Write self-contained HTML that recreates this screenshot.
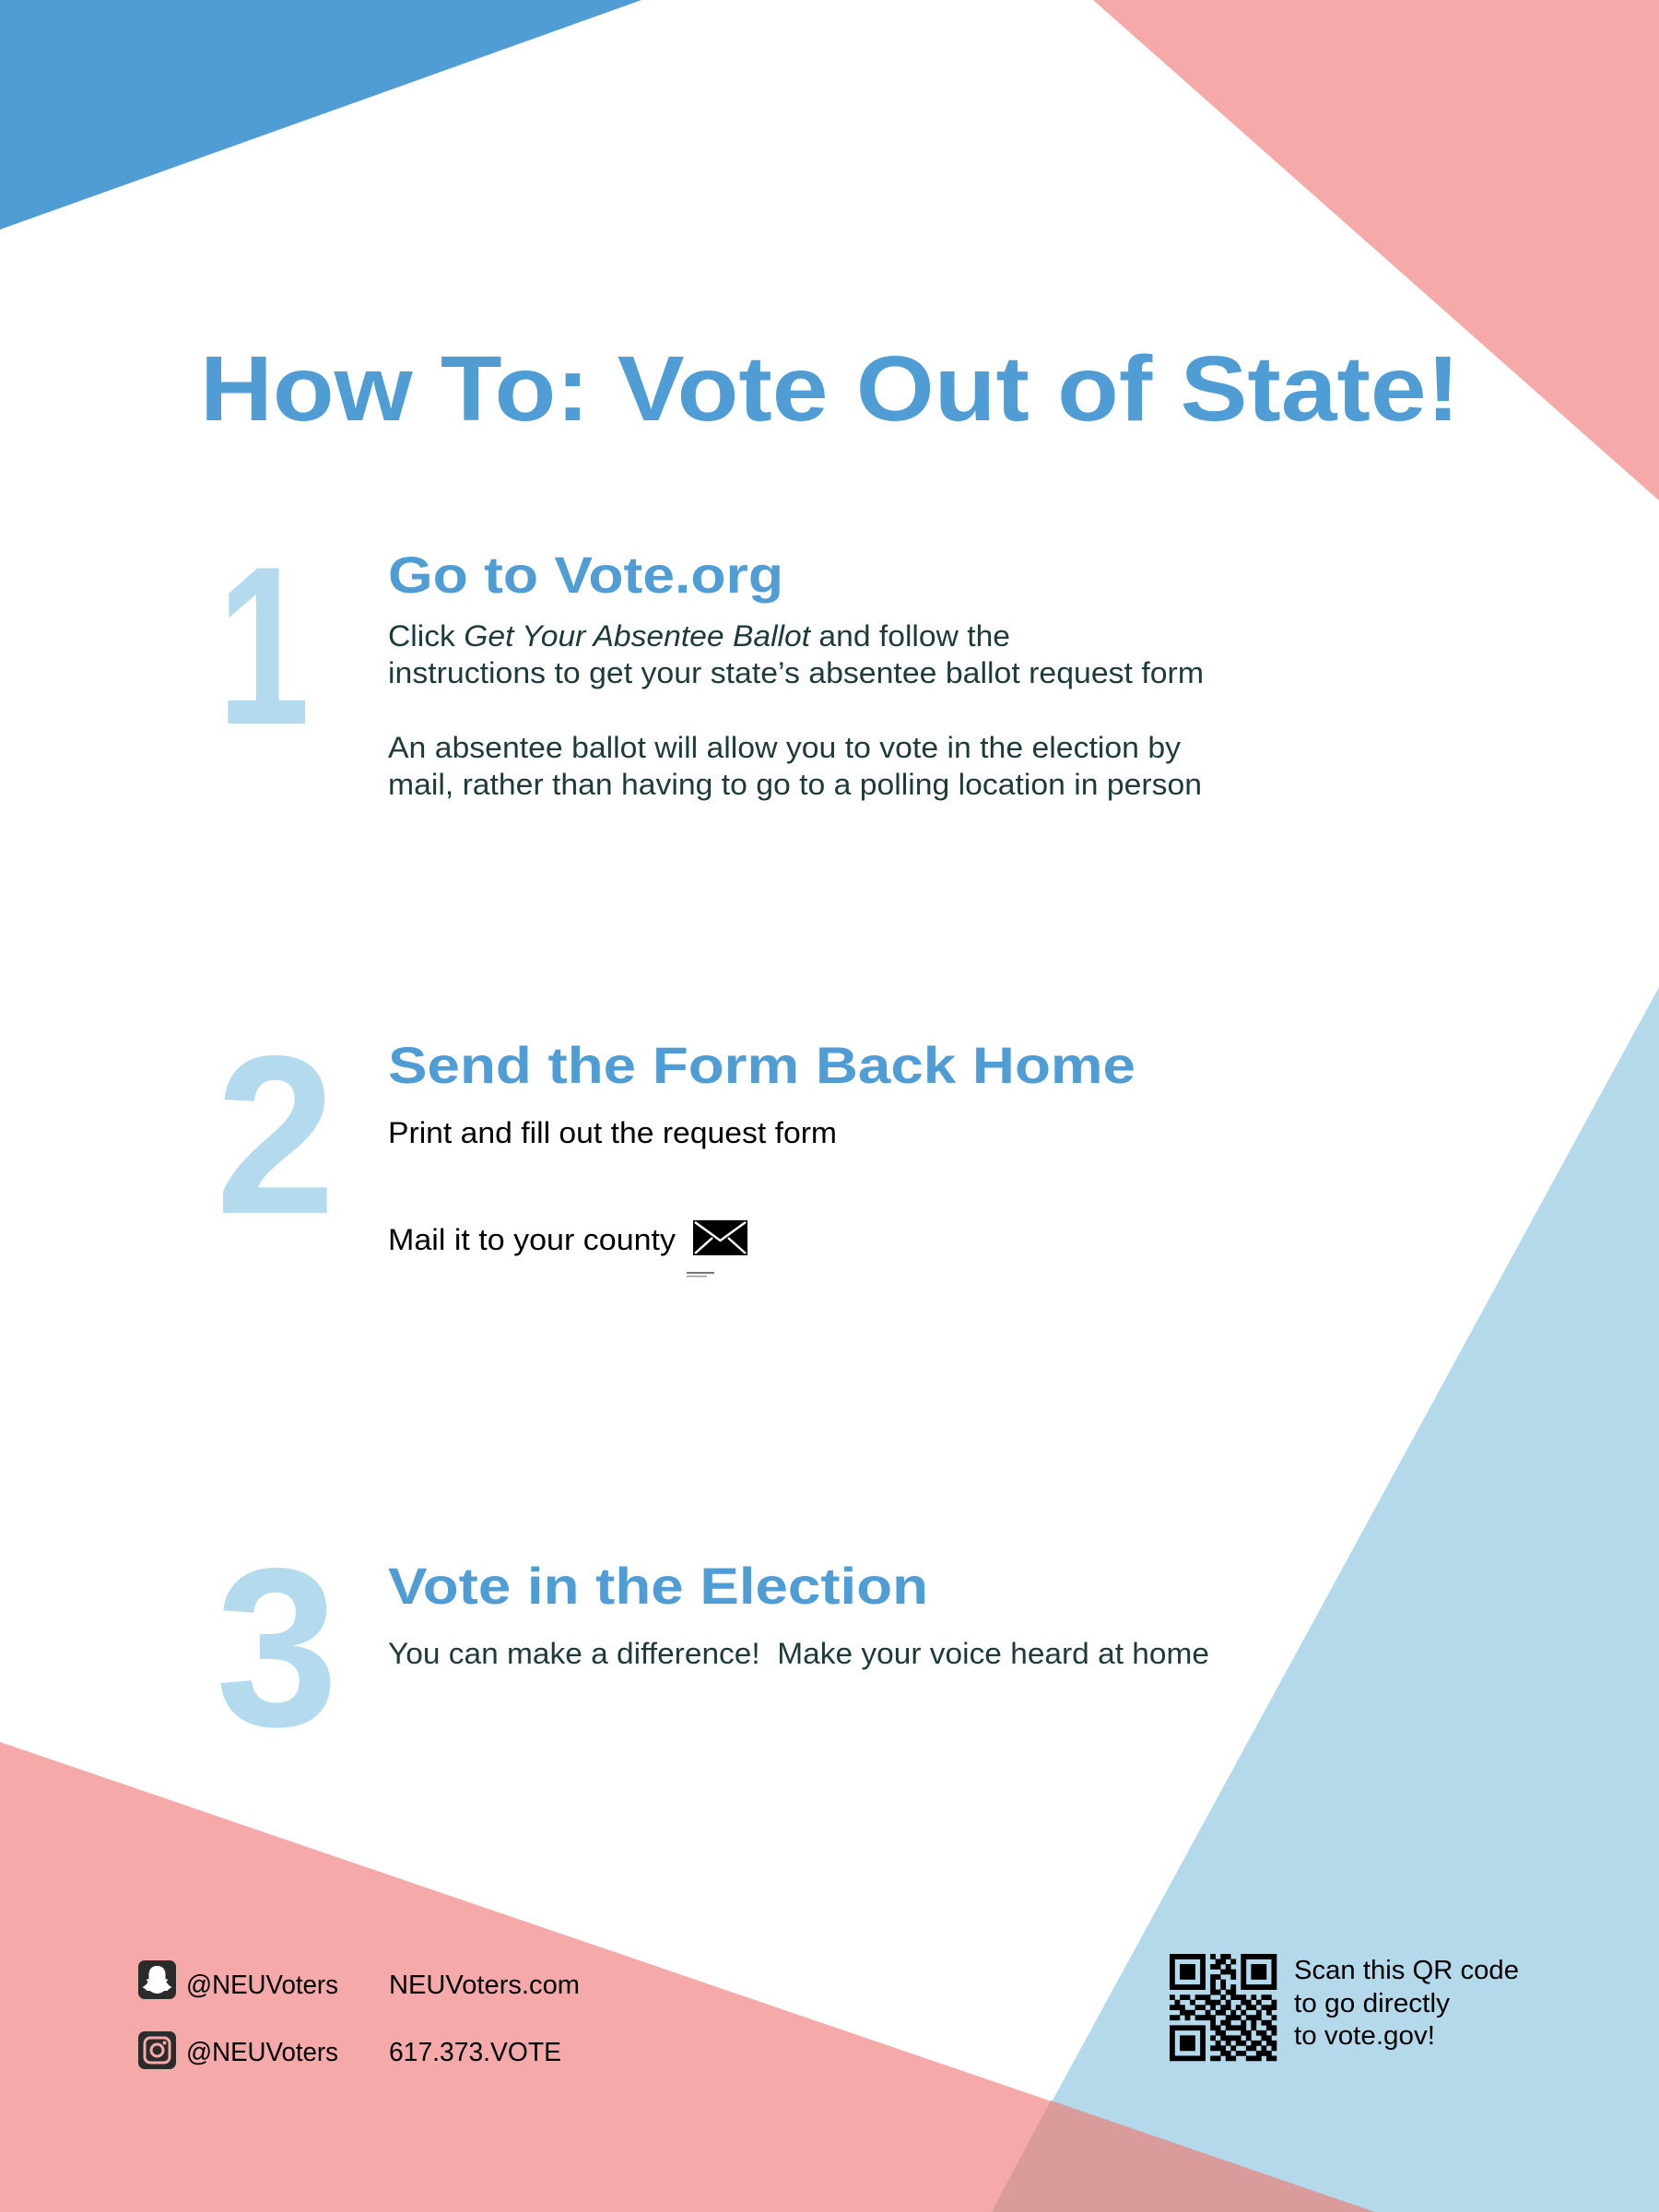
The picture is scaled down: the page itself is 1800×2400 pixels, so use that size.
<!DOCTYPE html>
<html><head><meta charset="utf-8"><style>
html,body{margin:0;padding:0;background:#fff;}
svg{display:block;}
text{font-family:"Liberation Sans",sans-serif;}
</style></head><body>
<svg id="s" xmlns="http://www.w3.org/2000/svg" width="1800" height="2400" viewBox="0 0 1800 2400">
<rect width="1800" height="2400" fill="#fff"/>
<polygon points="0,0 696,0 0,249" fill="#4f9dd4"/>
<polygon points="1186,0 1800,0 1800,543" fill="#f6a9a9"/>
<polygon points="1800,1071 1800,2400 1076,2400" fill="#b3d9eb"/>
<polygon points="0,1890 1492,2400 0,2400" fill="#f6a9a9"/>
<polygon points="1140,2279 1492,2400 1076,2400" fill="#d99c9a"/>

<text x="217" y="456" font-size="100" font-weight="bold" fill="#4f9dd4" textLength="1367" lengthAdjust="spacingAndGlyphs">How To: Vote Out of State!</text>

<g fill="#b3dbed" font-weight="bold">
<text x="236" y="785" font-size="245" textLength="100" lengthAdjust="spacingAndGlyphs">1</text>
<text x="234" y="1316" font-size="245" textLength="130" lengthAdjust="spacingAndGlyphs">2</text>
<text x="234" y="1872" font-size="245" textLength="133" lengthAdjust="spacingAndGlyphs">3</text>
</g>

<g fill="#4f9dd4" font-size="56" font-weight="bold">
<text x="421" y="643" textLength="429" lengthAdjust="spacingAndGlyphs">Go to Vote.org</text>
<text x="421" y="1175" textLength="811" lengthAdjust="spacingAndGlyphs">Send the Form Back Home</text>
<text x="421" y="1740" textLength="586" lengthAdjust="spacingAndGlyphs">Vote in the Election</text>
</g>

<g font-size="32" fill="#1e3a3a">
<text x="421" y="701" textLength="675" lengthAdjust="spacingAndGlyphs">Click <tspan font-style="italic">Get Your Absentee Ballot</tspan> and follow the</text>
<text x="421" y="741" textLength="885" lengthAdjust="spacingAndGlyphs">instructions to get your state’s absentee ballot request form</text>
<text x="421" y="822" textLength="860" lengthAdjust="spacingAndGlyphs">An absentee ballot will allow you to vote in the election by</text>
<text x="421" y="862" textLength="883" lengthAdjust="spacingAndGlyphs">mail, rather than having to go to a polling location in person</text>
<text x="421" y="1805" textLength="891" lengthAdjust="spacingAndGlyphs" xml:space="preserve">You can make a difference!  Make your voice heard at home</text>
</g>
<g font-size="32" fill="#000">
<text x="421" y="1240" textLength="487" lengthAdjust="spacingAndGlyphs">Print and fill out the request form</text>
<text x="421" y="1356" textLength="312" lengthAdjust="spacingAndGlyphs">Mail it to your county</text>
</g>
<rect x="752" y="1324" width="59" height="38" fill="#000"/>
<polyline points="754,1326 781.5,1346 809,1326" fill="none" stroke="#fff" stroke-width="2.5"/>
<polyline points="754,1360 773,1343" fill="none" stroke="#fff" stroke-width="2.5"/>
<polyline points="809,1360 790,1343" fill="none" stroke="#fff" stroke-width="2.5"/>
<rect x="745" y="1380" width="30" height="2" fill="#777"/>
<rect x="745" y="1384" width="22" height="1.5" fill="#999"/>

<rect x="150" y="2127" width="41" height="42" rx="7" fill="#2b2b2b"/>
<path d="M170.5,2133 c-6,0 -9,4 -9,9 v5 l-3,1 2,2 c-1,3 -4,5 -6,6 l3,2 2,2 3,0 c2,1 4,3 8,3 s6,-2 8,-3 l3,0 2,-2 3,-2 c-2,-1 -5,-3 -6,-6 l2,-2 -3,-1 v-5 c0,-5 -3,-9 -9,-9z" fill="#fff"/>
<rect x="150" y="2204" width="41" height="41" rx="7" fill="#2b2b2b"/>
<rect x="157" y="2211" width="27" height="27" rx="6" fill="none" stroke="#f6a9a9" stroke-width="3"/>
<circle cx="170.5" cy="2224.5" r="6.5" fill="none" stroke="#f6a9a9" stroke-width="3"/>
<circle cx="178.5" cy="2216.5" r="2" fill="#f6a9a9"/>
<g font-size="29" fill="#000">
<text x="202" y="2163" textLength="165" lengthAdjust="spacingAndGlyphs">@NEUVoters</text>
<text x="202" y="2236" textLength="165" lengthAdjust="spacingAndGlyphs">@NEUVoters</text>
<text x="422" y="2163" textLength="207" lengthAdjust="spacingAndGlyphs">NEUVoters.com</text>
<text x="422" y="2236" textLength="187" lengthAdjust="spacingAndGlyphs">617.373.VOTE</text>
<text x="1404" y="2147" textLength="244" lengthAdjust="spacingAndGlyphs">Scan this QR code</text>
<text x="1404" y="2183" textLength="169" lengthAdjust="spacingAndGlyphs">to go directly</text>
<text x="1404" y="2218" textLength="153" lengthAdjust="spacingAndGlyphs">to vote.gov!</text>
</g>
<g id="qr" fill="#000"></g>
</svg>
<script>
var rows=["111111101011001111111","100000100110101000001","101110101101001011101","101110100011101011101","101110101100101011101","100000101010001000001","111111101010101111111","000000001101100000000","101101110010111010110","010010011101001101001","111001101011010110111","001110010110101001010","110101111001110111001","000000001011001010110","111111101101111010011","100000100110001101101","101110101011110100110","101110100101011011011","101110101110100110101","100000100011011001110","111111101101100111011"];
var g=document.getElementById('qr'),m=116/21,d="";
for(var r=0;r<21;r++)for(var c=0;c<21;c++)if(rows[r][c]=="1"){var x=1269+c*m,y=2120+r*m;d+="M"+x.toFixed(2)+" "+y.toFixed(2)+"h"+(m+0.3).toFixed(2)+"v"+(m+0.3).toFixed(2)+"h-"+(m+0.3).toFixed(2)+"z";}
var p=document.createElementNS("http://www.w3.org/2000/svg","path");p.setAttribute("d",d);g.appendChild(p);
</script>
</body></html>
